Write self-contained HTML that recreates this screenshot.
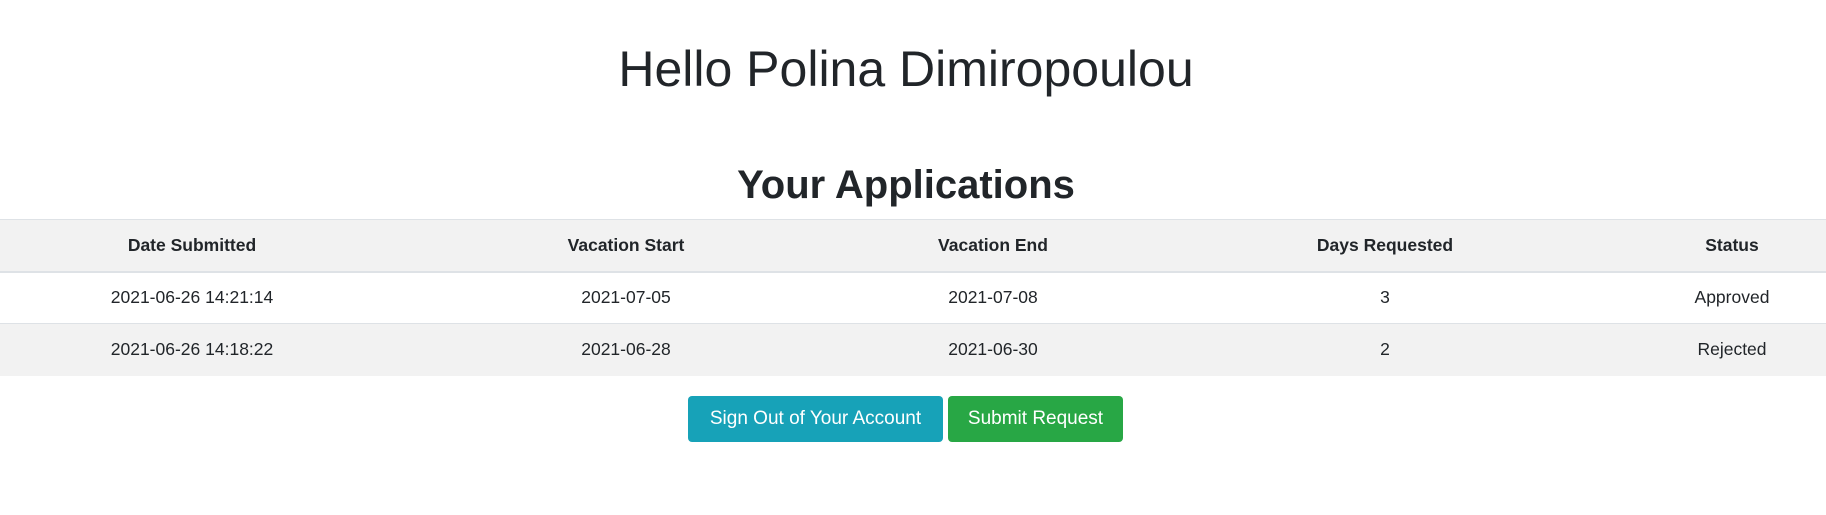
<!DOCTYPE html>
<html><head><meta charset="utf-8"><style>
body{margin:0;width:1826px;height:515px;background:#fff;font-family:"Liberation Sans",Arial,sans-serif;color:#212529;overflow:hidden;position:relative}
h1{position:absolute;top:39px;left:-7px;width:1826px;margin:0;text-align:center;font-weight:400;font-size:50px;line-height:60px}
h2{position:absolute;top:159px;left:-7px;width:1826px;margin:0;text-align:center;font-weight:700;font-size:40px;line-height:52px}
.tw{position:absolute;top:219px;left:0;width:1826px}
.tw .bg{position:absolute;left:0;width:1826px;height:52px;background:#f2f2f2}
table{position:relative;width:1812px;border-collapse:collapse;font-size:17.5px;table-layout:fixed}
td,th{text-align:center;padding:0}
thead tr{height:52px}
tbody tr{height:52px}
.line{position:absolute;left:0;width:1826px;background:#dee2e6}
.b{position:absolute;top:396px;height:46px;line-height:46px;color:#fff;font-size:19px;text-align:center;border-radius:4px}
</style></head><body>
<h1>Hello Polina Dimiropoulou</h1>
<h2>Your Applications</h2>
<div class="tw">
<div class="bg" style="top:0"></div>
<div class="bg" style="top:105px;height:52px"></div>
<div class="line" style="top:0;height:1px"></div>
<div class="line" style="top:52px;height:2px"></div>
<div class="line" style="top:104px;height:1px"></div>
<table>
<colgroup><col style="width:384px"><col style="width:484px"><col style="width:250px"><col style="width:534px"><col style="width:160px"></colgroup>
<thead><tr><th>Date Submitted</th><th>Vacation Start</th><th>Vacation End</th><th>Days Requested</th><th>Status</th></tr></thead>
<tbody>
<tr><td>2021-06-26 14:21:14</td><td>2021-07-05</td><td>2021-07-08</td><td>3</td><td>Approved</td></tr>
<tr><td>2021-06-26 14:18:22</td><td>2021-06-28</td><td>2021-06-30</td><td>2</td><td>Rejected</td></tr>
</tbody></table>
</div>
<div class="b" style="left:688px;width:255px;background:#17a2b8">Sign Out of Your Account</div>
<div class="b" style="left:948px;width:175px;background:#28a745">Submit Request</div>
</body></html>
